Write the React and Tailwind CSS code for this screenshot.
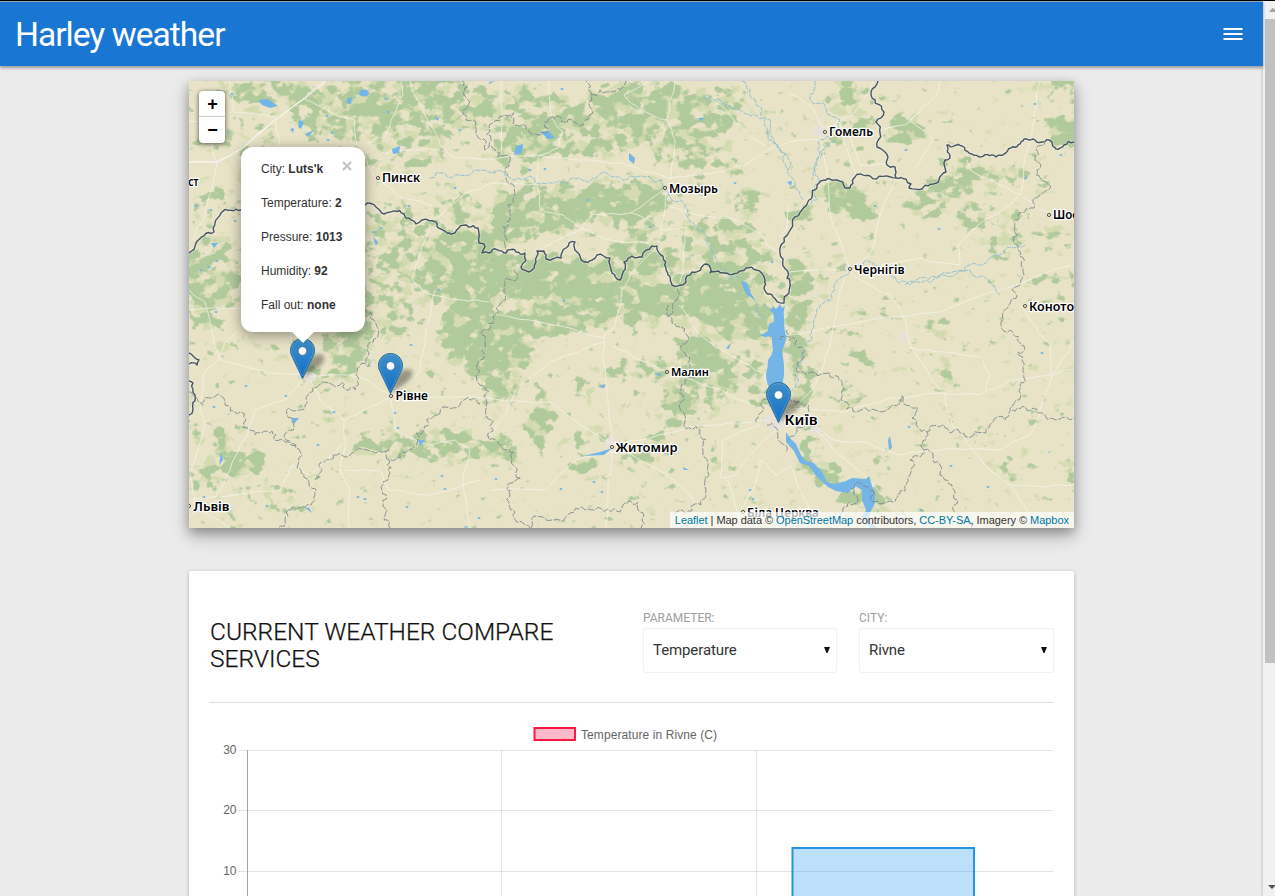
import React from 'react';

/* ---------- map geometry ---------- */

function seeded(seed) {
  let s = seed;
  return () => {
    s = (s * 16807) % 2147483647;
    return s / 2147483647 - 0.5;
  };
}

// Turns a coarse polyline into a naturally irregular one by midpoint displacement.
function rough(text, amount = 0.3, levels = 2) {
  const rnd = seeded(text.length * 977 + 13);
  let pts = text.trim().split(/\s+/).map((p) => p.split(',').map(Number));
  for (let l = 0; l < levels; l++) {
    const next = [pts[0]];
    for (let i = 1; i < pts.length; i++) {
      const [x0, y0] = pts[i - 1];
      const [x1, y1] = pts[i];
      const len = Math.hypot(x1 - x0, y1 - y0);
      if (len > 4) {
        const d = rnd() * Math.min(len, 14) * amount * 1.6;
        next.push([(x0 + x1) / 2 - ((y1 - y0) / len) * d, (y0 + y1) / 2 + ((x1 - x0) / len) * d]);
      }
      next.push([x1, y1]);
    }
    pts = next;
  }
  return pts.map((p) => p[0].toFixed(1) + ',' + p[1].toFixed(1)).join(' ');
}

const borders = [
  '189,253 196,243 214,232 215,223 221,213 241,210 290,200 340,206 365,205 376,207 384,214 404,214 406,218 416,224 422,220 436,222 441,229 455,233 459,228 478,228 479,243 484,244 482,253 489,253 506,253 508,250 516,252 525,253 521,267 529,272 536,262 537,251 544,251 546,259 561,258 566,248 575,242 577,252 584,262 597,255 610,258 612,273 620,280 624,262 632,256 642,257 652,246 657,246 666,268 672,285 686,282 692,272 707,264 710,273 727,273 746,268 756,270 765,280 764,288 776,300 784,303 789,293 787,278 780,253 784,238 789,232 802,210 809,200 819,183 837,180 845,188 850,188 854,178 861,174 870,176 896,178 906,179 911,184 909,188 922,189 939,180 946,172 945,160 950,158 947,145 962,146 979,157 996,157 1011,148 1024,139 1042,142 1052,142 1056,149 1064,145 1074,142',
  '896,178 895,167 887,165 888,157 877,147 880,133 876,122 884,112 871,92 878,81',
  '189,353 193,356 199,360 197,365 189,364',
  '189,381 193,383 195,395 193,410 189,422',
];

const regionLines = [
  '462,81 464,95 463,114 476,131 484,139 485,150 489,147 493,123 504,115 514,113 520,126 529,131 547,132 549,118 560,117 576,123 588,119 591,94 586,81',
  '591,94 610,92 625,84 626,81',
  '491,146 503,156 510,160 509,184 515,193 508,205 510,220 505,236 507,252',
  '514,270 515,281 504,285 501,303 496,308 489,330 481,334 477,365 480,385 487,402 489,440 509,450 514,452 521,478 511,483 510,495 515,512 530,528',
  '365,307 374,320 378,335 368,348 370,366 360,366 355,390 343,382 313,388 306,398 305,407 289,408 292,418 286,440 296,448 297,468 309,482 315,495 311,505 287,510 285,520 278,528',
  '189,392 204,401 225,402 240,412 243,427 255,435 272,431 285,442 297,445',
  '315,480 320,463 330,460 350,455 362,449 389,450 390,460 408,450 424,430 436,415 460,405 471,400 480,404',
  '389,460 389,475 382,490 387,510 390,528',
  '668,305 672,320 686,334 680,348 690,365 695,378 683,395 684,425 700,430 703,450 706,490 695,504 672,515',
  '531,528 534,516 570,513 595,510 620,512 630,501 638,510 641,528',
  '789,340 804,358 799,372 830,373 842,385 841,400 857,412 890,408 902,395 918,408 912,418 927,432 944,425 960,433 986,433 1005,420 1013,405 1020,385 1024,378 1022,360 1024,346 1010,330 1001,325 1009,305 1012,290 1023,272 1018,250 1014,230 1018,215 1035,205 1040,195 1051,187 1036,175 1035,160 1045,142',
  '927,432 924,450 910,460 910,475 905,491 893,502 880,504 870,490 855,485 858,500 843,508 843,520',
  '924,450 940,465 952,485 954,505 965,520 972,528',
  '1012,410 1033,408 1045,415 1074,418',
  '672,285 677,300 668,315',
  '756,422 761,406 768,400 780,405 796,402 808,408 805,425 795,434 788,440',
  '780,340 790,338 787,330',
  '767,425 778,435 786,452',
];

const roads = [
  '189,162 218,161 240,150 275,120 305,98 324,81',
  '189,245 205,215 217,163 205,125 189,120',
  '230,81 233,112 275,117 279,145',
  '303,98 340,117 355,120 357,145 367,162 378,180 396,195 432,206',
  '367,143 385,137 394,115 403,95 401,81',
  '410,81 425,115 440,145 455,158 489,160 500,158 540,155 580,160 620,163 668,178 700,175 745,165 766,151 789,142',
  '371,170 392,150 440,150',
  '434,220 463,195 489,184 520,183 536,185',
  '430,224 420,255 412,280 424,292 462,300 489,302',
  '501,81 502,155',
  '549,81 552,118 563,132 558,148 538,157 537,183 540,209 563,215 576,225 582,229 593,214 630,213 667,187',
  '544,247 563,237 582,229 610,240 650,243',
  '671,180 672,165 675,140 667,120 640,110 624,95 648,81',
  '667,120 675,81',
  '703,95 720,105 735,122 752,137 766,145',
  '665,185 664,215 658,242',
  '666,205 690,213 730,218 750,228 762,235 767,245 776,250',
  '780,238 786,230 789,206',
  '631,213 650,220 664,230 687,228 684,260 680,282',
  '658,245 630,275 622,290 621,305 614,328 604,335 603,360 607,395 612,440 608,500 606,528',
  '489,315 530,320 570,328 604,338',
  '612,345 640,360 680,377 720,389 755,407',
  '604,342 550,362 515,390 506,415 489,436',
  '189,290 205,302 220,360 260,370 310,376 350,375 370,382 390,395 430,397 489,398 550,402 580,425 612,444 640,460 671,478 695,502',
  '612,444 650,438 690,427 730,423 766,420',
  '618,450 575,460 545,490 490,490',
  '679,305 700,335 730,355 755,370 765,372 768,400',
  '189,310 270,308 290,330 300,378',
  '239,330 224,345 216,362 203,375 200,410 205,425 190,475 198,510 189,517',
  '302,380 285,400 255,410 244,440 230,470 215,498',
  '310,380 325,405 344,420 345,440 310,475 292,465 280,490 235,495 190,500',
  '344,420 390,397 420,372 426,330 435,290',
  '345,440 340,470 350,490 349,528',
  '345,470 380,470 389,490 430,495 480,480',
  '391,400 396,430 430,445 455,440 470,450 463,475 470,528',
  '189,505 230,528',
  '789,93 810,105 822,128 840,125 858,180',
  '820,135 828,180 833,225 849,268 840,290 830,345 815,385 789,412',
  '823,132 855,112 870,90 873,81',
  '789,142 820,140',
  '845,130 860,165 889,165',
  '896,178 880,215 872,250 850,270 920,258 960,265 958,245 978,225 1010,205 1022,190 1027,150 1035,110 1040,81',
  '850,272 870,285 890,295 905,320 910,345 932,380 945,395 952,425 985,465 1010,485 1020,500 1040,528',
  '789,272 840,270',
  '789,335 870,320 940,312 1000,290 1074,265',
  '789,408 845,412 890,398 940,393 980,395 1010,380 1050,375 1074,368',
  '815,425 835,440 865,442 900,455 950,448 1000,450 1030,435 1040,410 1052,375 1050,345 1030,320 1020,305',
  '815,430 840,455 870,480 895,508',
  '910,348 945,352 980,357 990,375 985,390',
  '1010,485 1045,487 1074,485',
  '1052,375 1070,350 1074,340',
  '780,425 755,450 735,475 720,478 722,440 760,425',
  '760,460 753,490 740,510',
  '789,465 800,490 810,510 835,528',
  '760,460 775,475 789,468',
  '940,81 936,95 910,120 933,140 915,168',
  '884,130 905,125 920,112',
  '967,160 970,170 1000,185 1020,195 1040,210 1050,213',
  '728,480 740,528',
];

const rivers = [
  '430,178 460,175 489,172 510,178 540,184 565,183 580,178 600,174 630,176 660,180 668,192 685,205 690,222 705,235 712,250 725,270 742,280 752,298 766,318',
  '703,95 720,100 740,110 755,115 770,125 778,145 789,160 795,185 803,200',
  '742,81 755,100 768,140 785,155 789,170',
  '835,140 822,150 815,170 817,200 809,205',
  '815,81 810,100 840,120 820,140 816,160 812,180',
  '789,398 795,375 806,345 814,325 820,305 835,290 850,270 870,262 890,275 910,285 940,275 970,265 1000,255 1025,245',
  '905,285 930,283 970,270 1000,295',
];

const lakes = [
  '258,100 268,99 278,106 270,108 262,105',
  '299,120 304,122 301,129 298,127',
  '305,134 314,130 308,137',
  '290,129 294,128 293,133',
  '348,98 352,97 351,104 346,103',
  '392,149 400,146 399,153 393,154',
  '434,117 439,118 438,121',
  '437,82 446,81 442,82',
  '540,132 549,131 555,138 548,139',
  '516,146 523,144 522,153 514,155',
  '629,153 635,158 634,164 629,160',
  '698,118 705,118 700,121',
  '489,82 495,81 489,84',
  '741,281 747,283 750,292 755,299 748,296 744,290',
  '211,243 218,243 214,248',
  '291,418 299,418 294,424',
  '373,237 378,242 376,246',
  '418,440 425,440 420,446',
  '463,527 469,526 466,528',
  '221,452 223,460 219,465',
  '654,373 662,374 660,376',
  '598,387 606,384 604,388',
  '726,348 731,343 729,349',
  '888,440 890,436 892,448 889,450',
  '304,507 309,508 312,513',
  '583,456 600,452 612,448 604,455',
  '683,467 689,470 684,470',
  '1048,452 1053,451 1048,453',
  '787,182 792,181 791,186',
];

const lakeDots = [
  [386, 99], [388, 112], [232, 94], [327, 116], [332, 133], [328, 140], [460, 130], [196, 206], [211, 210], [235, 221],
  [562, 89], [545, 169], [530, 170], [409, 206], [455, 188], [439, 290], [201, 270], [209, 267], [217, 261], [588, 200],
  [772, 262], [1035, 104], [906, 150], [1061, 155], [875, 206], [939, 229], [1026, 178], [216, 312], [411, 345], [246, 386],
  [286, 396], [214, 407], [334, 412], [318, 445], [395, 413], [398, 428], [204, 497], [267, 506], [358, 497], [365, 499],
  [445, 489], [442, 476], [407, 507], [479, 518], [496, 479], [561, 489], [594, 482], [602, 492], [750, 490], [753, 499],
  [951, 466], [988, 487], [1042, 353], [909, 427], [921, 510], [564, 301], [650, 227], [735, 183], [374, 232], [381, 228],
];

// [cx, cy, rx, ry, density]
const woods = [
  [270, 92, 55, 12, 0.75], [340, 112, 55, 30, 0.6], [390, 100, 50, 28, 0.6], [445, 105, 45, 35, 0.6], [400, 150, 60, 22, 0.45],
  [250, 140, 35, 25, 0.3], [210, 140, 25, 12, 0.4], [220, 205, 28, 22, 0.4], [212, 275, 34, 40, 0.65], [205, 300, 25, 20, 0.4],
  [400, 240, 36, 36, 0.5], [390, 300, 34, 40, 0.5], [455, 210, 30, 20, 0.5], [465, 270, 42, 42, 0.9], [475, 335, 35, 38, 0.9],
  [520, 110, 45, 25, 0.6], [520, 150, 30, 18, 0.75], [590, 130, 60, 28, 0.65], [640, 100, 50, 20, 0.7], [680, 120, 55, 32, 0.65],
  [730, 105, 30, 22, 0.45], [700, 160, 45, 18, 0.5], [620, 200, 60, 18, 0.9], [545, 210, 55, 25, 0.85], [505, 230, 20, 25, 0.7],
  [550, 280, 60, 25, 1], [620, 300, 50, 22, 0.9], [640, 260, 40, 18, 0.85], [640, 225, 30, 16, 0.6], [700, 300, 60, 20, 0.95],
  [720, 240, 40, 26, 0.6], [755, 250, 25, 20, 0.4], [750, 200, 22, 14, 0.55], [725, 280, 50, 18, 0.8], [740, 320, 35, 20, 0.8],
  [500, 380, 22, 25, 0.75], [510, 340, 24, 32, 0.85], [535, 325, 40, 18, 0.7], [590, 318, 60, 12, 0.6], [640, 370, 42, 12, 0.6], [570, 385, 45, 10, 0.35],
  [700, 360, 26, 22, 0.9], [685, 400, 26, 22, 0.7], [740, 370, 28, 18, 0.5], [695, 345, 18, 14, 0.7], [720, 390, 20, 15, 0.6],
  [800, 285, 13, 32, 1], [797, 335, 10, 40, 1], [809, 378, 6, 20, 1], [798, 400, 12, 12, 0.75], [765, 335, 14, 16, 0.7], [763, 390, 10, 16, 0.7],
  [846, 200, 22, 14, 1.05], [830, 188, 15, 10, 0.9], [867, 214, 14, 8, 0.9], [800, 215, 16, 18, 0.6], [850, 95, 25, 16, 0.65],
  [860, 123, 18, 8, 0.8], [908, 130, 20, 14, 1.1], [840, 148, 25, 8, 0.5], [1066, 132, 20, 16, 1.1], [1058, 86, 16, 10, 0.9],
  [1005, 175, 40, 7, 0.9], [950, 185, 32, 12, 0.75], [925, 205, 22, 14, 0.6], [975, 215, 26, 14, 0.6], [1012, 225, 12, 20, 0.5],
  [1000, 248, 22, 10, 0.5], [960, 165, 20, 12, 0.5], [1050, 235, 24, 10, 0.5], [1050, 280, 25, 14, 0.45], [835, 270, 18, 14, 0.35],
  [862, 357, 12, 7, 1.1], [855, 332, 15, 6, 0.6], [880, 315, 20, 10, 0.4], [940, 330, 16, 12, 0.5], [942, 375, 10, 22, 0.6],
  [848, 398, 14, 8, 0.75], [825, 475, 22, 12, 0.75], [808, 445, 8, 22, 0.7], [852, 495, 16, 10, 0.9], [877, 500, 8, 14, 0.9],
  [878, 462, 12, 6, 0.7], [1010, 470, 12, 8, 0.6], [975, 440, 14, 10, 0.35], [1032, 425, 8, 14, 0.45], [1070, 465, 8, 12, 0.5],
  [1000, 505, 10, 10, 0.4], [540, 425, 14, 24, 0.8], [498, 450, 18, 14, 0.85], [583, 467, 14, 10, 0.8], [645, 455, 30, 8, 0.85],
  [590, 440, 18, 8, 0.7], [600, 425, 12, 6, 0.4], [675, 418, 20, 10, 0.6], [665, 437, 22, 4, 0.5], [650, 485, 20, 8, 0.3],
  [725, 470, 15, 12, 0.4], [710, 490, 15, 6, 0.4], [375, 442, 35, 9, 0.8], [425, 448, 40, 9, 0.95], [465, 445, 22, 12, 0.85],
  [440, 432, 25, 5, 0.5], [240, 460, 28, 14, 0.85], [205, 478, 25, 12, 0.7], [210, 435, 30, 14, 0.5], [260, 480, 22, 8, 0.5],
  [285, 500, 16, 10, 0.55], [330, 375, 28, 14, 0.5], [350, 345, 26, 20, 0.8], [230, 350, 20, 12, 0.35], [335, 420, 15, 5, 0.4],
  [205, 325, 20, 10, 0.45], [280, 345, 20, 10, 0.35], [255, 500, 20, 5, 0.3], [215, 515, 30, 5, 0.35], [420, 370, 20, 15, 0.25],
];

const places = [
  { x: 382, y: 182, t: 'Пинск', s: 12.4, d: [378, 178], w: 38 },
  { x: 669, y: 193, t: 'Мозырь', s: 12.4, d: [665, 188], w: 49 },
  { x: 829, y: 136, t: 'Гомель', s: 12.4, d: [825, 132], w: 44 },
  { x: 854, y: 274, t: 'Чернігів', s: 12.4, d: [850, 269], w: 50.5 },
  { x: 1053, y: 219, t: 'Шостка', s: 12.4, d: [1049, 215], w: 44 },
  { x: 1029, y: 311, t: 'Конотоп', s: 12.4, d: [1025, 306], w: 53 },
  { x: 395.5, y: 400, t: 'Рівне', s: 12.4, d: [391, 396], w: 32.5 },
  { x: 671, y: 376, t: 'Малин', s: 11.3, d: [667, 372], w: 38 },
  { x: 615.5, y: 452, t: 'Житомир', s: 12.6, d: [612, 447], w: 62 },
  { x: 784.5, y: 425, t: 'Київ', s: 14.5, w: 33 },
  { x: 193.5, y: 511, t: 'Львів', s: 12.6, d: [189, 506], w: 36 },
  { x: 747, y: 517, t: 'Біла Церква', s: 12, d: [743, 512], w: 72 },
  { x: 169.5, y: 186, t: 'Брест', s: 12.4, w: 29 },
];

const pins = [[290, 338], [378, 353], [766, 382]];

function Pin({ x, y }) {
  return (
    <g transform={`translate(${x} ${y})`}>
      <path d="M13 40 L17 25 Q24 14 33 17 Q37 22 28 30 Z" fill="#000" opacity="0.34" filter="url(#soft)" />
      <path
        d="M12.5 .5C5.8.5.5 5.8.5 12.4c0 2.7.8 4.7 2 7.1L12.5 40.5 22.5 19.5c1.200-2.400 2-4.400 2-7.100C24.500 5.800 19.200.5 12.500.5Z"
        fill="url(#pin)"
        stroke="#2e6c97"
        strokeWidth="1"
      />
      <path d="M12.500 1.600C6.400 1.600 1.600 6.400 1.600 12.400c0 2.500.8 4.400 1.900 6.600L12.500 38 21.500 19c1.100-2.200 1.900-4.100 1.900-6.600C23.400 6.400 18.600 1.600 12.500 1.600Z" fill="none" stroke="#fff" strokeOpacity="0.14" />
      <circle cx="12.500" cy="13" r="4.300" fill="#fff" stroke="#2e6c97" strokeWidth="0.700" />
    </g>
  );
}

function MapCanvas() {
  return (
    <svg className="block h-[447px] w-[885px]" viewBox="189 81 885 447" fontFamily="'Noto Sans', sans-serif">
      <defs>
        <linearGradient id="pin" x1="0" y1="0" x2="0" y2="1">
          <stop offset="0" stopColor="#3f8fc9" />
          <stop offset="1" stopColor="#126fc6" />
        </linearGradient>
        <filter id="soft" x="-50%" y="-50%" width="200%" height="200%">
          <feGaussianBlur stdDeviation="2.2" />
        </filter>
        <filter id="wood" filterUnits="userSpaceOnUse" x="189" y="81" width="885" height="447" colorInterpolationFilters="sRGB">
          <feGaussianBlur in="SourceGraphic" stdDeviation="4.5" result="density" />
          <feTurbulence type="fractalNoise" baseFrequency="0.075 0.095" numOctaves="3" seed="7" result="noise" />
          <feComposite in="density" in2="noise" operator="arithmetic" k1="0" k2="0.42" k3="1" k4="0" result="sum" />
          <feComponentTransfer in="sum" result="cut">
            <feFuncA type="linear" slope="9" intercept="-6.500" />
          </feComponentTransfer>
          <feFlood floodColor="#b1ca9b" />
          <feComposite operator="in" in2="cut" />
        </filter>
        <filter id="scrub" filterUnits="userSpaceOnUse" x="189" y="81" width="885" height="447" colorInterpolationFilters="sRGB">
          <feGaussianBlur in="SourceGraphic" stdDeviation="8" result="density" />
          <feTurbulence type="fractalNoise" baseFrequency="0.065 0.085" numOctaves="3" seed="21" result="noise" />
          <feComposite in="density" in2="noise" operator="arithmetic" k1="0" k2="0.4" k3="1" k4="0" result="sum" />
          <feComponentTransfer in="sum" result="cut">
            <feFuncA type="linear" slope="8" intercept="-5.650" />
          </feComponentTransfer>
          <feFlood floodColor="#d5dbb1" />
          <feComposite operator="in" in2="cut" />
        </filter>
      </defs>

      <rect x="189" y="81" width="885" height="447" fill="#e8e3c7" />
      {['url(#scrub)', 'url(#wood)'].map((f) => (
        <g key={f} filter={f}>
          {woods.map((w, i) => (
            <ellipse key={i} cx={w[0]} cy={w[1]} rx={w[2]} ry={w[3]} fill="#000" fillOpacity={Math.min(1, w[4])} />
          ))}
        </g>
      ))}

      <g fill="#e6e0d8">
        <ellipse cx="819" cy="131" rx="7" ry="6" />
        <ellipse cx="218" cy="162" rx="5" ry="3" />
        <ellipse cx="777" cy="421" rx="13" ry="9" />
        <ellipse cx="611" cy="442" rx="6" ry="5" />
        <ellipse cx="849" cy="268" rx="4" ry="4" />
        <ellipse cx="903" cy="337" rx="4" ry="6" />
        <ellipse cx="816" cy="430" rx="6" ry="4" />
        <ellipse cx="310" cy="377" rx="7" ry="5" />
      </g>

      <g fill="none" stroke="#f6f3ea" strokeWidth="1" strokeOpacity="0.75">
        {roads.map((r, i) => (
          <polyline key={i} points={rough(r, 0.12, 2)} />
        ))}
      </g>
      <polyline points="189,162 218,162 240,150 275,120 305,98 326,81" fill="none" stroke="#f8f5ec" strokeWidth="1.500" strokeOpacity="0.800" />

      <g fill="none" stroke="#85bcd4" strokeWidth="1" strokeOpacity="0.85">
        {rivers.map((r, i) => (
          <polyline key={i} points={rough(r, 0.4, 3)} strokeDasharray="5 1" />
        ))}
      </g>
      <g fill="#73b5e6">
        <ellipse cx="364" cy="93" rx="5" ry="3.500" />
        {lakes.map((l, i) => (
          <polygon key={i} points={l} />
        ))}
        {lakeDots.map((d, i) => (
          <ellipse key={i} cx={d[0]} cy={d[1]} rx="1.500" ry="1.100" />
        ))}
        <polygon points={rough('763,303 770,310 773,308 771,303 776,309 780,304 782,308 785,305 784,320 786,337 782,350 784,365 782,386 777,392 768,386 766,375 768,360 773,350 772,337 765,337 759,335 768,331 769,324 774,322 773,313 767,308', 0.1, 1)} />
        <polygon points="786,432 790,438 796,444 801,455 806,461 814,463 822,472 827,482 834,484 846,481 852,478 866,479 869,476 872,486 875,492 875,503 871,511 868,520 877,528 870,528 862,517 866,510 862,500 862,490 855,486 848,493 836,491 828,487 816,476 809,466 800,463 794,451 786,442" />
      </g>

      <g fill="none" stroke="#7f8b90" strokeWidth="1" strokeDasharray="7 1.500" strokeOpacity="0.9">
        {regionLines.map((r, i) => (
          <polyline key={i} points={rough(r, 0.5, 3)} />
        ))}
      </g>
      <g fill="none" strokeLinejoin="round">
        {borders.map((b, i) => (
          <g key={i}>
            <polyline points={rough(b, 0.3, 3)} stroke="#fff" strokeOpacity="0.25" strokeWidth="3.500" />
            <polyline points={rough(b, 0.3, 3)} stroke="#465463" strokeWidth="1.400" />
          </g>
        ))}
      </g>

      {places.map((p) => (
        <g key={p.t}>
          {p.d && <circle cx={p.d[0]} cy={p.d[1]} r="1.600" fill="#e8e3c7" stroke="#444" strokeWidth="0.900" />}
          <text
            x={p.x}
            y={p.y}
            fontSize={p.s}
            fontWeight="600"
            textLength={p.w}
            lengthAdjust="spacingAndGlyphs"
            fill="#000"
            stroke="#fff"
            strokeWidth="2.600"
            strokeLinejoin="round"
            paintOrder="stroke"
          >
            {p.t}
          </text>
        </g>
      ))}

      {pins.map(([x, y]) => (
        <Pin key={x} x={x} y={y} />
      ))}
    </svg>
  );
}

/* ---------- page parts ---------- */

const readings = [
  ['City', "Luts'k"],
  ['Temperature', '2'],
  ['Pressure', '1013'],
  ['Humidity', '92'],
  ['Fall out', 'none'],
];

function Popup() {
  return (
    <div className="absolute top-[66px] left-[52px] h-[185px] w-[124px] rounded-xl bg-white shadow-[0_3px_14px_rgba(0,0,0,0.4)]">
      <div className="flex flex-col gap-[17px] pt-[14px] pl-5 font-['Liberation_Sans',Arial,sans-serif] text-[12px] leading-[17px] whitespace-nowrap text-[#333]">
        {readings.map(([k, v]) => (
          <p key={k}>
            {k}: <b>{v}</b>
          </p>
        ))}
      </div>
      <svg className="absolute top-[14px] right-[13px] h-[10px] w-[10px]" viewBox="0 0 10 10">
        <path d="M1 1l8 8M9 1l-8 8" stroke="#c3c3c3" strokeWidth="2.200" />
      </svg>
      <svg className="absolute top-[185px] left-[51px] h-[11px] w-[22px]" viewBox="0 0 22 11">
        <path d="M0 0h22L11 11z" fill="#fff" />
      </svg>
    </div>
  );
}

function WeatherMap() {
  return (
    <section className="relative h-[447px] w-[885px] shadow-[0_8px_17px_0_rgba(0,0,0,0.25),0_4px_10px_0_rgba(0,0,0,0.25)]">
      <div className="h-full w-full overflow-hidden">
        <MapCanvas />
      </div>
      <div className="absolute top-[10px] left-[10px] flex w-[26px] flex-col overflow-hidden rounded bg-white shadow-[0_1px_5px_rgba(0,0,0,0.65)]">
        {['+', '−'].map((sign) => (
          <button
            key={sign}
            className="flex h-[26px] items-center justify-center border-b border-[#ccc] pl-px font-['Liberation_Sans',Arial,sans-serif] text-[18px] leading-none font-bold text-black last:border-b-0"
          >
            {sign}
          </button>
        ))}
      </div>
      <Popup />
      <div className="absolute right-0 bottom-0 bg-white/70 px-[5px] font-['Liberation_Sans',Arial,sans-serif] text-[11px] leading-4 tracking-[-0.04px] whitespace-nowrap text-[#333]">
        <a className="text-[#0078A8]">Leaflet</a> | Map data © <a className="text-[#0078A8]">OpenStreetMap</a> contributors,{' '}
        <a className="text-[#0078A8]">CC-BY-SA</a>, Imagery © <a className="text-[#0078A8]">Mapbox</a>
      </div>
    </section>
  );
}

function Picker({ label, value }) {
  return (
    <label className="flex flex-col">
      <span className="h-[18px] text-[12px] leading-[16px] text-[#9e9e9e]">{label}</span>
      <span className="flex h-[45px] items-center justify-between rounded-[2px] border border-[#f2f2f2] bg-white/90 pr-[6px] pl-[9px] text-[15px] font-normal tracking-[-0.1px] text-[#333]">
        {value}
        <svg className="mb-[2px] h-[6px] w-[6px]" viewBox="0 0 6 6">
          <path d="M0 0h6L3.500 6h-1z" fill="#111" />
        </svg>
      </span>
    </label>
  );
}

function Chart() {
  const ticks = [
    [30, 750.5],
    [20, 810.5],
    [10, 871.5],
  ];
  return (
    <svg className="block h-[193px] w-[845px]" viewBox="209 703 845 193" fontFamily="'Liberation Sans', Arial, sans-serif" fontSize="12" fill="#666">
      <rect x="534.500" y="728" width="40.500" height="12" fill="#ffb9c9" stroke="#ff1744" strokeWidth="2" />
      <text x="581" y="739" textLength="136">Temperature in Rivne (C)</text>
      {ticks.map(([v, y]) => (
        <g key={v}>
          <text x="236.500" y={y + 3.700} textAnchor="end">{v}</text>
          <path d={`M238 ${y}H1053`} stroke="#e5e5e5" />
        </g>
      ))}
      <path d="M501.500 750V896M756.500 750V896" stroke="#000" strokeOpacity="0.100" />
      <path d="M247.500 750V896" stroke="#a3a3a3" />
      <rect x="792.500" y="848" width="181.500" height="90" fill="#2196f3" fillOpacity="0.300" stroke="#2395e8" strokeWidth="2" />
    </svg>
  );
}

function Comparison() {
  return (
    <section className="mt-[43px] h-[400px] w-[885px] rounded-[2px] bg-white px-5 shadow-[0_1px_4px_rgba(0,0,0,0.24)]">
      <header className="flex h-[132px] justify-between border-b border-[#e0e0e0] pt-[39px]">
        <h2 className="w-[360px] pt-[8px] pl-px text-[24.500px] leading-[27px] font-light text-[#111] [-webkit-text-stroke:0.25px_#111]">
          CURRENT WEATHER COMPARE SERVICES
        </h2>
        <div className="grid grid-cols-[194px_195px] gap-[22px]">
          <Picker label="PARAMETER:" value="Temperature" />
          <Picker label="CITY:" value="Rivne" />
        </div>
      </header>
      <Chart />
    </section>
  );
}

export default function App() {
  return (
    <div className="flex h-[896px] w-[1275px] overflow-hidden bg-[#ebebeb] font-[Roboto,sans-serif]">
      <div className="flex w-[1263px] flex-col">
        <nav className="relative flex h-[66px] shrink-0 items-center justify-between border-t border-black bg-[#1976d2] pr-5 pl-[15px] text-white shadow-[0_2px_3px_rgba(0,0,0,0.35),inset_0_1px_0_#9aa4ad]">
          <h1 className="pt-[2px] text-[33.600px] leading-[64px] tracking-[-1px]">Harley weather</h1>
          <svg className="h-3 w-5" viewBox="0 0 20 12">
            <path d="M.500 0h19v2h-19zM.500 5h19v2h-19zM.500 10h19v2h-19z" fill="#fff" />
          </svg>
        </nav>
        <main className="flex flex-col items-center pt-[15px]">
          <WeatherMap />
          <Comparison />
        </main>
      </div>
      <aside className="flex w-3 flex-col border-t border-black bg-[#f1f1f1] pl-[2px] shadow-[-1px_0_2px_rgba(0,0,0,0.15)]">
        <div className="flex h-[18px] items-center pl-[4px]">
          <svg className="h-1 w-[6px]" viewBox="0 0 6 4">
            <path d="M0 4L3.500 0H4L6 2v2z" fill="#a3a3a3" />
          </svg>
        </div>
        <div className="h-[644px] bg-[#c1c1c1]" />
        <div className="mt-auto flex h-[19px] items-center pl-[3px]">
          <svg className="h-1 w-[7px]" viewBox="0 0 7 4">
            <path d="M0 0h7v1L4 4z" fill="#505050" />
          </svg>
        </div>
      </aside>
    </div>
  );
}
